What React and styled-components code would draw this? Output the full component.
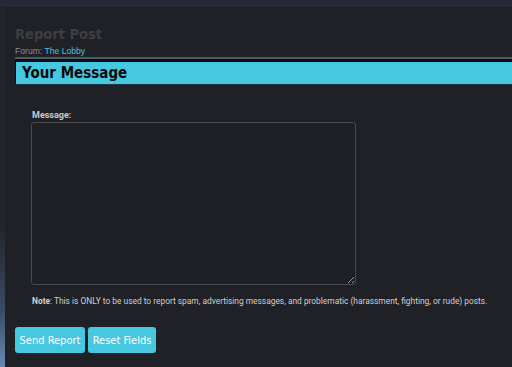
import React from "react";
import styled, { createGlobalStyle } from "styled-components";

const Global = createGlobalStyle`
  html, body { margin: 0; padding: 0; background: #202126; }
  body { width: 512px; height: 367px; overflow: hidden; }
  * { box-sizing: border-box; }
`;

const Page = styled.div`
  width: 512px;
  height: 367px;
  display: flex;
  flex-direction: column;
  background: linear-gradient(to bottom, #23252c 0%, #23252c 62%, #3a4c66 85%, #6a8ab4 100%);
`;

const TopStrip = styled.div`
  height: 7px;
  flex: none;
  background: #272936;
`;

const Main = styled.main`
  flex: 1;
  margin-left: 5px;
  background: #202126;
  padding: 17px 0 0 10px;
  display: flex;
  flex-direction: column;
`;

const Title = styled.h1`
  margin: 0;
  font-family: "DejaVu Sans Condensed", "DejaVu Sans", sans-serif;
  font-weight: bold;
  font-size: 14.5px;
  line-height: 20px;
  color: #3d3e42;
`;

const Crumb = styled.div`
  margin-top: 1px;
  font-family: "Liberation Sans", Arial, sans-serif;
  font-size: 8.6px;
  line-height: 11px;
  padding-top: 1px;
  height: 11px;
  color: #8c8c90;
`;

const CrumbLink = styled.a`
  color: #4ac4dc;
  text-decoration: none;
`;

const Rule = styled.div`
  margin-top: 1px;
  height: 2px;
  background: #4d5a68;
`;

const SectionBar = styled.h2`
  margin: 0;
  height: 26px;
  background: #46c8e0;
  border-top: 3px solid #0e0f12;
  border-left: 1px solid #0e0f12;
  border-bottom: 1px solid #17363d;
  padding-left: 6px;
  font-family: "DejaVu Sans Condensed", "DejaVu Sans", sans-serif;
  font-weight: bold;
  font-size: 15px;
  line-height: 22px;
  color: #0a0a0a;
`;

const Form = styled.form`
  padding: 25px 0 0 16px;
  display: flex;
  flex-direction: column;
`;

const Label = styled.label`
  font-family: Roboto, "Liberation Sans", sans-serif;
  font-weight: bold;
  font-size: 9px;
  line-height: 11px;
  color: #c9c9cc;
  margin-left: 1px;
`;

const TextArea = styled.textarea`
  margin-top: 1px;
  width: 325px;
  height: 163px;
  background: #1f2025;
  border: 1px solid #4a4b50;
  border-radius: 3px;
  color: #ddd;
  outline: none;
  resize: both;
  display: block;
`;

const Note = styled.p`
  margin: 11px 0 0 1px;
  font-family: Roboto, "Liberation Sans", sans-serif;
  font-size: 8.4px;
  line-height: 11px;
  color: #cfcfd2;
  white-space: nowrap;
  & b { font-weight: bold; }
`;

const Buttons = styled.div`
  display: flex;
  gap: 3px;
  margin-top: 20px;
`;

const Button = styled.button`
  height: 26px;
  width: ${(p) => p.$w}px;
  padding: 0;
  background: #46c8e0;
  border: none;
  border-radius: 3px;
  color: #ffffff;
  font-family: "DejaVu Sans Condensed", "DejaVu Sans", sans-serif;
  font-size: 11px;
  cursor: pointer;
`;

export default function App() {
  return (
    <>
      <Global />
      <Page>
        <TopStrip />
        <Main>
          <Title>Report Post</Title>
          <Crumb>
            Forum: <CrumbLink href="#">The Lobby</CrumbLink>
          </Crumb>
          <Rule />
          <SectionBar>Your Message</SectionBar>
          <Form onSubmit={(e) => e.preventDefault()}>
            <Label htmlFor="msg">Message:</Label>
            <TextArea id="msg" />
            <Note>
              <b>Note</b>: This is ONLY to be used to report spam, advertising messages, and problematic (harassment, fighting, or rude) posts.
            </Note>
          </Form>
          <Buttons>
            <Button $w={70} type="button">Send Report</Button>
            <Button $w={68} type="button">Reset Fields</Button>
          </Buttons>
        </Main>
      </Page>
    </>
  );
}
